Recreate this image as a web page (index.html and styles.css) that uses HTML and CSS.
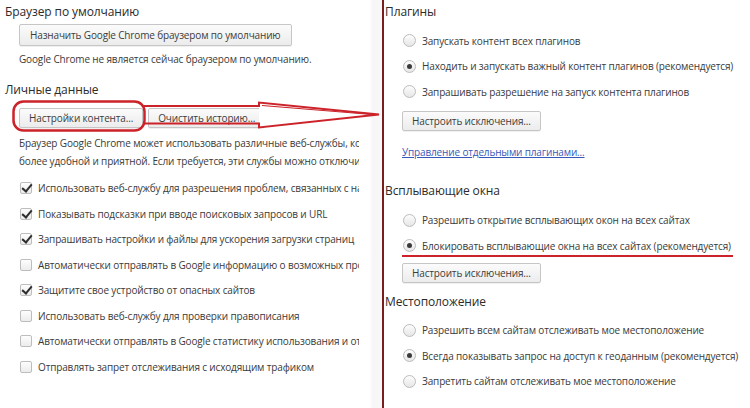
FILE: index.html
```html
<!DOCTYPE html>
<html lang="ru">
<head>
    <meta charset="UTF-8">
    <title>Настройки</title>
    <link rel="stylesheet" href="styles.css">
</head>
<body>
    <div class="page">
        <!-- Left: general settings -->
        <div class="left">
            <div class="left-inner">
                <h2 class="heading first">Браузер по умолчанию</h2>
                <button class="btn btn-tall">Назначить Google Chrome браузером по умолчанию</button>
                <p class="note">Google Chrome не является сейчас браузером по умолчанию.</p>

                <h2 class="heading personal">Личные данные</h2>
                <div class="btn-row">
                    <button class="btn">Настройки контента...</button>
                    <button class="btn">Очистить историю...</button>
                </div>
                <p class="text">Браузер Google Chrome может использовать различные веб-службы, которые делают работу</p>
                <p class="text">более удобной и приятной. Если требуется, эти службы можно отключить.</p>

                <div class="checks">
                    <div class="check-row"><span class="box on"></span>Использовать веб-службу для разрешения проблем, связанных с навигацией</div>
                    <div class="check-row"><span class="box on"></span>Показывать подсказки при вводе поисковых запросов и URL</div>
                    <div class="check-row"><span class="box on"></span>Запрашивать настройки и файлы для ускорения загрузки страниц</div>
                    <div class="check-row"><span class="box"></span>Автоматически отправлять в Google информацию о возможных проблемах</div>
                    <div class="check-row"><span class="box on"></span>Защитите свое устройство от опасных сайтов</div>
                    <div class="check-row"><span class="box"></span>Использовать веб-службу для проверки правописания</div>
                    <div class="check-row"><span class="box"></span>Автоматически отправлять в Google статистику использования и отчеты</div>
                    <div class="check-row"><span class="box"></span>Отправлять запрет отслеживания с исходящим трафиком</div>
                </div>
            </div>
            <div class="edge"></div>
        </div>

        <div class="divider"></div>

        <!-- Right: content settings -->
        <div class="right">
            <h2 class="heading first">Плагины</h2>
            <div class="radios plugins">
                <div class="radio-row"><span class="radio"></span>Запускать контент всех плагинов</div>
                <div class="radio-row"><span class="radio on"></span>Находить и запускать важный контент плагинов (рекомендуется)</div>
                <div class="radio-row"><span class="radio"></span>Запрашивать разрешение на запуск контента плагинов</div>
            </div>
            <button class="btn btn-exc">Настроить исключения...</button>
            <a class="link" href="#">Управление отдельными плагинами...</a>

            <h2 class="heading popups">Всплывающие окна</h2>
            <div class="radios popup-list">
                <div class="radio-row"><span class="radio"></span>Разрешить открытие всплывающих окон на всех сайтах</div>
                <div class="radio-row"><span class="radio on"></span>Блокировать всплывающие окна на всех сайтах (рекомендуется)</div>
            </div>
            <button class="btn btn-exc second">Настроить исключения...</button>

            <h2 class="heading location">Местоположение</h2>
            <div class="radios geo">
                <div class="radio-row"><span class="radio"></span>Разрешить всем сайтам отслеживать мое местоположение</div>
                <div class="radio-row"><span class="radio on"></span>Всегда показывать запрос на доступ к геоданным (рекомендуется)</div>
                <div class="radio-row"><span class="radio"></span>Запретить сайтам отслеживать мое местоположение</div>
            </div>
        </div>

        <!-- Hand-drawn red marks on top of the screenshot -->
        <svg class="marks" width="750" height="408" viewBox="0 0 750 408">
            <rect x="13.5" y="101.5" width="131" height="29" rx="10" ry="10" fill="none" stroke="#cc2229" stroke-width="2.5"/>
            <path d="M259 103 L378 114.5 L259 127 Z" fill="#fff" stroke="none"/>
            <path d="M143 106 L259 106 L259 102.5 L379 114.5 L259 127.5 L259 123.5 L143 123.5" fill="none" stroke="#cc2229" stroke-width="2" stroke-linejoin="miter"/>
            <path d="M262 105.5 L372 114.5" fill="none" stroke="#cc2229" stroke-width="1"/>
            <line x1="402" y1="256" x2="733" y2="256" stroke="#cc2229" stroke-width="2"/>
        </svg>
    </div>
</body>
</html>
```

FILE: styles.css
```css
/* Reset */
* {
    margin: 0;
    padding: 0;
    box-sizing: border-box;
}

body {
    background: #fff;
    font-family: 'Open Sans', 'Noto Sans', sans-serif;
    color: #3a3a3a;
    overflow: hidden;
}

.page {
    position: relative;
    display: flex;
    width: 750px;
    height: 408px;
}

/* Left column */
.left {
    display: flex;
    width: 382px;
    flex-shrink: 0;
}

.left-inner {
    width: 359px;
    padding-left: 5px;
    overflow: hidden;
    display: flex;
    flex-direction: column;
    align-items: flex-start;
    white-space: nowrap;
}

.edge {
    flex: 1;
    background: linear-gradient(90deg, #fff 0%, #fff 45%, #f6f6f6 60%, #f8f8f8 100%);
}

.heading {
    font-size: 12px;
    font-weight: normal;
    letter-spacing: -0.1px;
    line-height: 18px;
    color: #2b2b2b;
    white-space: nowrap;
}

.heading.first {
    margin-top: 3px;
}

.heading.personal {
    margin-top: 14px;
}

.btn {
    font-family: inherit;
    font-size: 10px;
    letter-spacing: -0.15px;
    color: #3c3c3c;
    height: 20px;
    padding: 0 9px;
    background: linear-gradient(#fbfbfb, #ececec);
    border: 1px solid #c6c6c6;
    border-radius: 2px;
    box-shadow: 0 1px 0 rgba(0, 0, 0, 0.06);
    white-space: nowrap;
}

.btn-tall {
    height: 22px;
    margin-top: 3px;
    margin-left: 14px;
    padding: 0 10px;
}

.note {
    font-size: 10px;
    letter-spacing: -0.15px;
    line-height: 16px;
    margin-top: 5px;
    margin-left: 14px;
}

.btn-row {
    display: flex;
    gap: 5px;
    margin-top: 9px;
    margin-left: 14px;
}

.text {
    font-size: 10px;
    letter-spacing: -0.15px;
    line-height: 18px;
    margin-left: 14px;
}

.btn-row + .text {
    margin-top: 6px;
}

.checks {
    margin-top: 5.5px;
    margin-left: 15px;
}

.check-row {
    display: flex;
    align-items: center;
    gap: 6px;
    height: 25.5px;
    font-size: 10px;
    letter-spacing: -0.15px;
}

.box {
    position: relative;
    width: 12px;
    height: 12px;
    flex-shrink: 0;
    border: 1px solid #bdbdbd;
    border-radius: 2px;
    background: linear-gradient(#fdfdfd, #ececec);
}

.box.on:after {
    content: '';
    position: absolute;
    left: 2.5px;
    top: -1px;
    width: 4px;
    height: 8px;
    border-right: 2.2px solid #2e2e2e;
    border-bottom: 2.2px solid #2e2e2e;
    transform: rotate(40deg);
}

/* Divider */
.divider {
    width: 2px;
    flex-shrink: 0;
    background: #7c1d1d;
}

/* Right column */
.right {
    flex: 1;
    padding-left: 1px;
    display: flex;
    flex-direction: column;
    align-items: flex-start;
    white-space: nowrap;
}

.radios {
    margin-left: 18px;
}

.radios.plugins {
    margin-top: 7px;
}

.radios.popup-list {
    margin-top: 7.5px;
}

.radios.geo {
    margin-top: 6.5px;
}

.radio-row {
    display: flex;
    align-items: center;
    gap: 6px;
    height: 25.5px;
    font-size: 10px;
    letter-spacing: -0.15px;
}

.radio {
    position: relative;
    width: 13px;
    height: 13px;
    flex-shrink: 0;
    border: 1px solid #bcbcbc;
    border-radius: 50%;
    background: linear-gradient(#fdfdfd, #e6e6e6);
}

.radio.on:after {
    content: '';
    position: absolute;
    left: 3px;
    top: 3px;
    width: 5px;
    height: 5px;
    border-radius: 50%;
    background: #3a3a3a;
}

.btn-exc {
    margin-top: 6.5px;
    margin-left: 17px;
}

.btn-exc.second {
    margin-top: 4.5px;
}

.link {
    margin-top: 13px;
    margin-left: 17px;
    font-size: 10px;
    letter-spacing: -0.15px;
    line-height: 16px;
    color: #3659b9;
    text-decoration: underline;
}

.heading.popups {
    margin-top: 22px;
}

.heading.location {
    margin-top: 10px;
}

/* Red annotation overlay */
.marks {
    position: absolute;
    top: 0;
    left: 0;
    pointer-events: none;
}
```
